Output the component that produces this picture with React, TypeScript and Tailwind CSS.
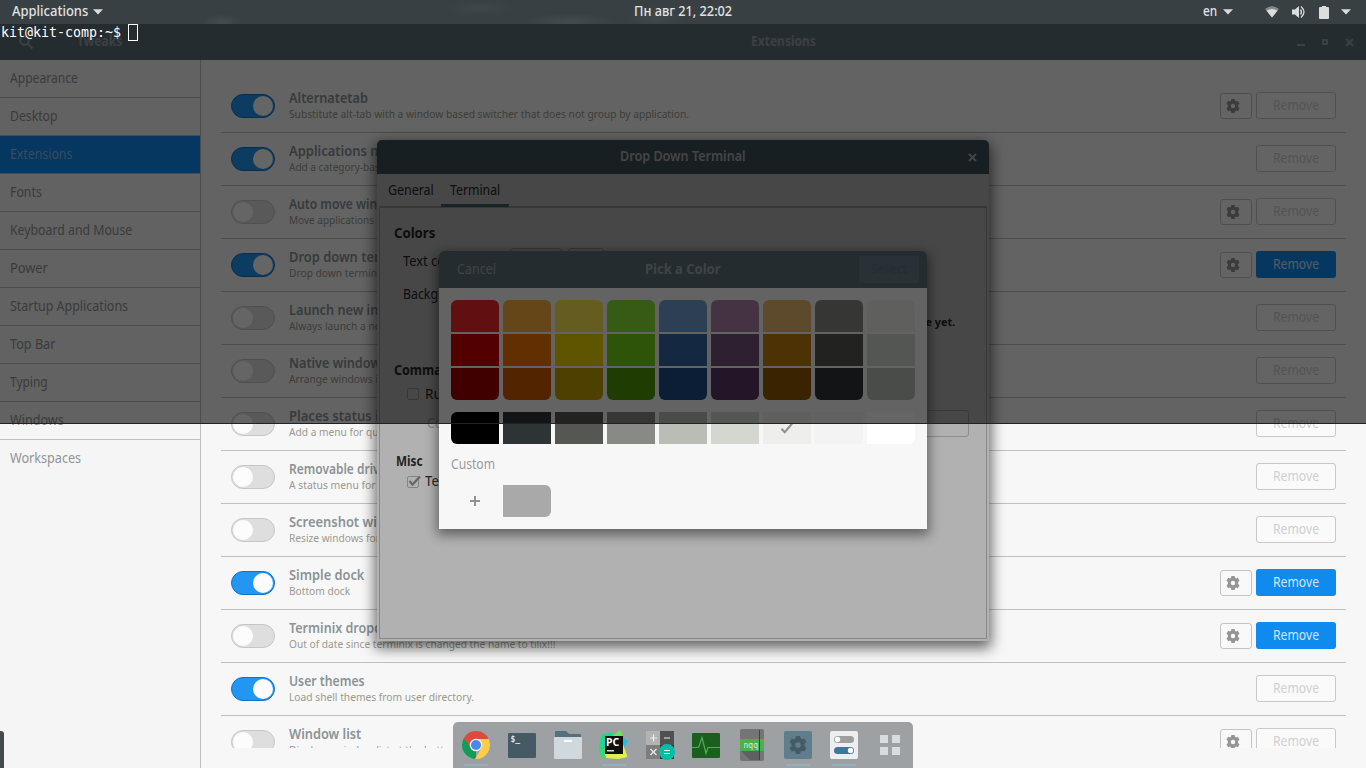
import { useLayoutEffect, useRef, useState } from "react";

/* Text set to an exact measured width, like the condensed desktop font. */
function Fit({ w, className = "", children }: { w: number; className?: string; children: string }) {
  const ref = useRef<HTMLSpanElement>(null);
  const [k, setK] = useState(1);
  useLayoutEffect(() => {
    if (ref.current) setK(w / ref.current.offsetWidth);
  }, [w, children]);
  return (
    <span className={`block whitespace-nowrap ${className}`} style={{ width: w }}>
      <span ref={ref} className="inline-block origin-left" style={{ transform: `scaleX(${k})` }}>
        {children}
      </span>
    </span>
  );
}

const sidebar: [string, number][] = [
  ["Appearance", 68],
  ["Desktop", 48],
  ["Extensions", 62],
  ["Fonts", 32],
  ["Keyboard and Mouse", 122],
  ["Power", 38],
  ["Startup Applications", 118],
  ["Top Bar", 45],
  ["Typing", 38],
  ["Windows", 54],
  ["Workspaces", 71],
];

type Ext = { t: string; tw: number; d: string; dw: number; on?: boolean; gear?: boolean; rm?: boolean };
const exts: Ext[] = [
  { t: "Alternatetab", tw: 79, d: "Substitute alt-tab with a window based switcher that does not group by application.", dw: 400, on: true, gear: true },
  { t: "Applications menu", tw: 118, d: "Add a category-based menu for applications.", dw: 211, on: true },
  { t: "Auto move windows", tw: 119, d: "Move applications to specific workspaces when they create windows.", dw: 322, gear: true },
  { t: "Drop down terminal", tw: 126, d: "Drop down terminal toggled by a key stroke.", dw: 213, on: true, gear: true, rm: true },
  { t: "Launch new instance", tw: 130, d: "Always launch a new instance when clicking in the dash.", dw: 270 },
  { t: "Native window placement", tw: 160, d: "Arrange windows in overview in a more compact way.", dw: 257 },
  { t: "Places status indicator", tw: 143, d: "Add a menu for quickly navigating places.", dw: 199 },
  { t: "Removable drive menu", tw: 135, d: "A status menu for accessing removable devices.", dw: 231 },
  { t: "Screenshot window sizer", tw: 155, d: "Resize windows for GNOME Software screenshots.", dw: 239 },
  { t: "Simple dock", tw: 75, d: "Bottom dock", dw: 61, on: true, gear: true, rm: true },
  { t: "Terminix dropdown", tw: 119, d: "Out of date since terminix is changed the name to tilix!!!", dw: 266, gear: true, rm: true },
  { t: "User themes", tw: 76, d: "Load shell themes from user directory.", dw: 185, on: true },
  { t: "Window list", tw: 72, d: "Display a window list at the bottom of the screen.", dw: 240, gear: true },
];

function Toggle({ on }: { on?: boolean }) {
  return on ? (
    <div className="flex h-6 w-11 items-center justify-end rounded-full border border-[#1272c8] bg-[#2196f3] px-px">
      <div className="size-5 rounded-full bg-[#fcfcfc]" />
    </div>
  ) : (
    <div className="flex h-6 w-11 items-center rounded-full border border-[#c6c6c6] bg-[#dedede] px-px">
      <div className="size-5 rounded-full bg-[#fcfcfc]" />
    </div>
  );
}

function Gear({ s, fill }: { s: number; fill: string }) {
  return (
    <svg width={s} height={s} viewBox="0 0 14 14">
      <path
        fill={fill}
        fillRule="evenodd"
        d="M5.4 0h3.2l.4 1.8 1.1.65 1.8-.6 1.6 2.8L12.1 6v2l1.4 1.35-1.6 2.8-1.8-.6-1.1.65-.4 1.8H5.4L5 12.2l-1.1-.65-1.8.6-1.6-2.8L1.9 8V6L.5 4.65l1.6-2.8 1.8.6L5 1.8zM7 4.8a2.2 2.2 0 1 0 0 4.4 2.2 2.2 0 0 0 0-4.4z"
      />
    </svg>
  );
}

function Row({ e }: { e: Ext }) {
  return (
    <div className="flex h-[53px] shrink-0 items-start border-b border-[#c0c0c0] px-2.5">
      <div className="mt-3.5">
        <Toggle on={e.on} />
      </div>
      <div className="mt-[9px] ml-3.5 flex-1">
        <Fit w={e.tw} className="text-[13.5px] leading-[18px] font-semibold text-[#8b9396]">{e.t}</Fit>
        <Fit w={e.dw} className="text-[11.5px] leading-[14px] text-[#98998f]">{e.d}</Fit>
      </div>
      {e.gear && (
        <div className="mt-[13px] mr-1 flex h-[26px] w-8 items-center rounded-[3px] border border-[#c4c4c4] bg-[#f9f9f9] pl-[5px]">
          <Gear s={14} fill="#959595" />
        </div>
      )}
      {e.rm ? (
        <div className="mt-3 flex h-[27px] w-20 items-center justify-center rounded-[3px] bg-[#0f8bf0] text-[13.5px] text-[#cfe7fa]">
          <Fit w={46}>Remove</Fit>
        </div>
      ) : (
        <div className="mt-3 flex h-[27px] w-20 items-center justify-center rounded-[3px] border border-[#c8c8c8] bg-[#fafafa] text-[13.5px] text-[#d0d0d0]">
          <Fit w={46}>Remove</Fit>
        </div>
      )}
    </div>
  );
}

function Cross({ color }: { color: string }) {
  return (
    <svg width="9" height="9" viewBox="0 0 9 9" stroke={color} strokeWidth="2">
      <path d="M1 1l7 7M8 1l-7 7" />
    </svg>
  );
}

const Caret = () => (
  <svg width="10" height="6" viewBox="0 0 10 6">
    <path d="M0 .3h10L5 5.6z" fill="#dadcdc" />
  </svg>
);

const palette = [
  ["bg-[#ef2929]", "bg-[#cc0000]", "bg-[#a40000]"],
  ["bg-[#fcaf3e]", "bg-[#f57900]", "bg-[#ce5c00]"],
  ["bg-[#fce94f]", "bg-[#edd400]", "bg-[#c4a000]"],
  ["bg-[#8ae234]", "bg-[#73d216]", "bg-[#4e9a06]"],
  ["bg-[#729fcf]", "bg-[#3465a4]", "bg-[#204a87]"],
  ["bg-[#ad7fa8]", "bg-[#75507b]", "bg-[#5c3566]"],
  ["bg-[#e9b96e]", "bg-[#c17d11]", "bg-[#8f5902]"],
  ["bg-[#888a85]", "bg-[#555753]", "bg-[#2e3436]"],
  ["bg-[#eeeeec]", "bg-[#d3d7cf]", "bg-[#babdb6]"],
];
const grays = [
  "bg-black rounded-l-[6px]",
  "bg-[#2e3436]",
  "bg-[#555753]",
  "bg-[#888a85]",
  "bg-[#babdb6]",
  "bg-[#d3d7cf]",
  "bg-[#eeeeec]",
  "bg-[#f3f3f3]",
  "bg-white rounded-r-[6px]",
];

function ColorDialog() {
  return (
    <div className="absolute top-[251px] left-[439px] flex h-[278px] w-[488px] flex-col rounded-t-[5px] bg-[#f7f7f7] shadow-[0_4px_12px_2px_rgba(0,0,0,0.45)]">
      <div className="flex h-[37px] items-center rounded-t-[5px] bg-[#5c6e79] pr-2 pl-[18px] text-[13.5px] text-[#9fa9ae]">
        <Fit w={39}>Cancel</Fit>
        <Fit w={75} className="ml-[149px] font-bold">Pick a Color</Fit>
        <div className="ml-auto flex h-[27px] w-[60px] items-center justify-center rounded-[2px] bg-[#667a87] text-[#587586]">
          <Fit w={37} className="font-semibold">Select</Fit>
        </div>
      </div>
      <div className="flex gap-1 px-3 pt-3">
        {palette.map((col, i) => (
          <div key={i} className="flex w-12 flex-col gap-0.5 overflow-hidden rounded-[6px]">
            {col.map((c) => (
              <div key={c} className={`h-8 ${c}`} />
            ))}
          </div>
        ))}
      </div>
      <div className="flex gap-1 px-3 pt-3">
        {grays.map((c, i) => (
          <div key={c} className={`flex h-8 w-12 items-center justify-center ${c}`}>
            {i === 6 && (
              <svg width="14" height="12" viewBox="0 0 14 12" fill="none" stroke="#8f908f" strokeWidth="2">
                <path d="M1.5 6.8l3.2 3.4L12.2 1.5" />
              </svg>
            )}
          </div>
        ))}
      </div>
      <Fit w={44} className="mt-2.5 ml-3 text-[13.5px] leading-5 text-[#999c9d]">Custom</Fit>
      <div className="mt-[11px] flex gap-1 px-3">
        <div className="flex h-8 w-12 items-center justify-center">
          <svg width="10" height="10" viewBox="0 0 10 10" fill="#939393">
            <path d="M4 0h2v4h4v2H6v4H4V6H0V4h4z" />
          </svg>
        </div>
        <div className="h-8 w-12 rounded-r-[6px] bg-[#a9a9a9]" />
      </div>
    </div>
  );
}

function SettingsDialog() {
  return (
    <div className="absolute top-[140px] left-[377px] flex h-[501px] w-[612px] flex-col rounded-t-[5px] bg-[#b1b1b1] text-[13.5px] text-[#242424] shadow-[0_5px_14px_2px_rgba(0,0,0,0.6)]">
      <div className="flex h-[34px] items-center rounded-t-[5px] bg-[#3e4e55] pl-[243px] text-[#a9adb0]">
        <Fit w={126} className="pb-0.5 font-semibold">Drop Down Terminal</Fit>
        <div className="mr-3 ml-auto">
          <Cross color="#a9adb0" />
        </div>
      </div>
      <div className="z-10 flex h-[33px] shrink-0">
        <div className="h-8 w-16 pt-1.5 pl-[11px]">
          <Fit w={46}>General</Fit>
        </div>
        <div className="h-[33px] w-[68px] border-b-3 border-[#425760] pt-1.5 pl-[9px]">
          <Fit w={50}>Terminal</Fit>
        </div>
      </div>
      <div className="-mt-px ml-0.5 h-[433px] w-[608px] shrink-0 border border-t-2 border-[#898989] pl-[14px]">
        <Fit w={41} className="mt-[15px] leading-5 font-bold">Colors</Fit>
        <div className="mt-2 flex pl-[9px] leading-5">
          <Fit w={62}>Text color:</Fit>
          <div className="-mt-2.5 ml-[45px] flex gap-1.5">
            <div className="mt-[7px] h-7 w-[52px] rounded-[3px] border border-[#898989]" />
            <div className="mt-[7px] h-7 w-9 rounded-[3px] border border-[#898989]" />
          </div>
        </div>
        <Fit w={106} className="mt-2 ml-[9px] leading-5">Background color:</Fit>
        <div className="mt-2 flex justify-end pr-[31px] text-[10.5px]">
          <Fit w={207} className="leading-5 font-bold">Transparency is not available here yet.</Fit>
        </div>
        <Fit w={64} className="mt-7 leading-5 font-bold">Command</Fit>
        <div className="mt-1 flex items-center gap-1.5 pl-[13px] leading-5">
          <div className="size-3 rounded-[2px] border border-[#898989]" />
          <Fit w={154}>Run a custom command</Fit>
        </div>
        <div className="mt-1.5 flex items-center pr-[17px] pl-[33px] text-[#858585]">
          <Fit w={108}>Custom command:</Fit>
          <div className="ml-auto h-[27px] w-[330px] rounded-[3px] border border-[#8d8d8d]" />
        </div>
        <Fit w={27} className="mt-[14px] ml-0.5 leading-5 font-bold">Misc</Fit>
        <div className="flex items-center gap-1.5 pl-[13px] leading-5">
          <svg width="14" height="13" viewBox="0 0 14 13" fill="none" className="-mr-0.5">
            <rect x=".5" y="1.5" width="11" height="11" rx="1.5" stroke="#848484" />
            <path d="M2.5 6l3 3.6L13 1.5" stroke="#666" strokeWidth="2.2" />
          </svg>
          <Fit w={146}>Terminal can be resized</Fit>
        </div>
      </div>
    </div>
  );
}

const icons = [
  { run: true, el: (
    <svg width="28" height="28" viewBox="0 0 28 28">
      <path d="M14 14V28A14 14 0 0 1 1.9 7z" fill="#109d59" />
      <path d="M14 8h12.6A14 14 0 0 1 13 28L19.500 17z" fill="#fccd45" />
      <path d="M1.900 7L8.800 17 14 8H26.600A14 14 0 0 0 1.900 7z" fill="#dd4b3e" />
      <circle cx="14" cy="14" r="6.3" fill="#f4f4f4" />
      <circle cx="14" cy="14" r="5" fill="#4687f4" />
    </svg>) },
  { el: (
    <svg width="28" height="28" viewBox="0 0 28 28">
      <rect y="2" width="28" height="25" rx="1" fill="#455a64" />
      <text x="2.5" y="11" fontSize="8" fontFamily="DejaVu Sans Mono, monospace" fontWeight="bold" fill="#dfe8eb">$_</text>
    </svg>) },
  { el: (
    <svg width="28" height="28" viewBox="0 0 28 28">
      <path d="M1 1q0-1 1-1h10l3 3h11q1 0 1 1v4H1z" fill="#546e7a" />
      <rect y="6" width="28" height="22" rx="1" fill="#cfd8dc" />
      <rect x="10" y="9" width="8" height="2" rx=".5" fill="#fff" />
    </svg>) },
  { run: true, el: (
    <svg width="30" height="30" viewBox="0 0 30 30">
      <path d="M2 5L13 2l4 5 7-1v18L5 27 0 20z" fill="#21d789" />
      <path d="M22 6l7 5-5 8z" fill="#12c6e8" />
      <path d="M13 6l8.500-6L24 7z" fill="#6fe35a" />
      <path d="M24 14l4.500 13-9 2-13-1-1-5h18z" fill="#dff04c" />
      <path d="M0 20l6-2v7l2 4-7-3z" fill="#35d779" />
      <rect x="6" y="6" width="18" height="18" fill="#101010" />
      <text x="7" y="15.5" fontSize="10.500" fontWeight="bold" fontFamily="Noto Sans, sans-serif" fill="#fff">PC</text>
      <rect x="8" y="20" width="7" height="1.5" fill="#ddd" />
    </svg>) },
  { el: (
    <svg width="30" height="30" viewBox="0 0 30 30">
      <path d="M1 1h14v14H1z" fill="#b3b3b3" />
      <path d="M15 1h14v14H15z" fill="#505050" />
      <path d="M1 15h14v14H1z" fill="#7d7d7d" />
      <path d="M15 15h14v14H15z" fill="#333" />
      <path d="M5 8h7M8.500 4.500v7M19 8h6M5.500 19l6 6M11.500 19l-6 6" stroke="#eee" strokeWidth="1.200" />
      <circle cx="22" cy="22" r="8" fill="#00bfa5" />
      <path d="M19 20.500h6M19 23.500h6" stroke="#fff" strokeWidth="1.200" />
    </svg>) },
  { el: (
    <svg width="28" height="28" viewBox="0 0 28 28">
      <rect y="2" width="28" height="25" rx="1" fill="#1b5e20" />
      <path d="M0 16.500h6l1-1 3-9 4 16 2-6h12" fill="none" stroke="#4caf50" strokeWidth="1.200" />
    </svg>) },
  { el: (
    <svg width="24" height="32" viewBox="0 0 24 32">
      <rect width="24" height="32" rx="2" fill="#757575" />
      <path d="M1 22h19v9H10z" fill="#606060" />
      <path d="M0 10h24v12H0z" fill="#4caf50" />
      <path d="M19.500 1v30" stroke="#424242" />
      <text x="3.500" y="18.500" fontSize="8" fontFamily="DejaVu Sans Mono, monospace" fill="#d7f0d8">nqq</text>
    </svg>) },
  { run: true, el: (
    <svg width="28" height="28" viewBox="0 0 28 28">
      <rect width="28" height="28" rx="2" fill="#607d8b" />
      <g transform="translate(5 5) scale(1.286)">
        <path fill="#455a64" fillRule="evenodd" d="M5.400 0h3.200l.4 1.800 1.100.65 1.800-.6 1.600 2.800L12.100 6v2l1.400 1.350-1.600 2.800-1.800-.6-1.100.65-.4 1.800H5.400L5 12.200l-1.100-.65-1.800.6-1.600-2.800L1.900 8V6L.5 4.650l1.600-2.800 1.800.6L5 1.800zM7 4.800a2.200 2.200 0 1 0 0 4.400 2.200 2.200 0 0 0 0-4.400z" />
      </g>
    </svg>) },
  { run: true, el: (
    <svg width="28" height="28" viewBox="0 0 28 28">
      <rect width="28" height="28" rx="2" fill="#eee" />
      <rect x="4" y="5" width="20" height="7" rx="3.500" fill="#9e9e9e" />
      <circle cx="7.500" cy="8.500" r="2.700" fill="#fff" />
      <rect x="4" y="16" width="20" height="7" rx="3.500" fill="#347b9e" />
      <circle cx="20.500" cy="19.500" r="2.700" fill="#fff" />
    </svg>) },
  { el: (
    <svg width="20" height="20" viewBox="0 0 20 20" fill="#d9dcde">
      <path d="M0 0h8v8H0zM12 0h8v8h-8zM0 12h8v8H0zM12 12h8v8h-8z" />
    </svg>) },
];

export default function App() {
  return (
    <div className="relative flex h-[768px] w-[1366px] flex-col overflow-hidden bg-[#f7f7f7] font-['Noto_Sans',sans-serif]">
      <header className="flex h-6 shrink-0 items-center bg-[#384043] bg-[radial-gradient(ellipse_20px_8px_at_222px_22px,#464c4e,transparent),radial-gradient(ellipse_35px_8px_at_480px_8px,#40474a,transparent),radial-gradient(ellipse_45px_9px_at_570px_22px,#454b4d,transparent),radial-gradient(ellipse_30px_12px_at_655px_18px,#42484a,transparent)] text-[13.5px] font-medium text-[#e0e2e2]">
        <Fit w={76} className="ml-3 pb-px">Applications</Fit>
        <div className="ml-[5px]"><Caret /></div>
        <Fit w={98} className="ml-[531px] pb-px">Пн авг 21, 22:02</Fit>
        <Fit w={14} className="ml-[471px] pb-px">en</Fit>
        <div className="ml-1.5"><Caret /></div>
        <svg className="ml-8" width="14" height="12" viewBox="0 0 14 12">
          <path d="M0 3Q7-2.500 14 3L7 11.500z" fill="#84898b" />
          <path d="M1.600 4.800Q7 1 12.400 4.800L7 11.500z" fill="#dcdede" />
        </svg>
        <svg className="ml-[13px]" width="14" height="14" viewBox="0 0 14 14" fill="none" stroke="#dcdede">
          <path d="M0 4.500h3L7 1v12L3 9.500H0z" fill="#dcdede" stroke="none" />
          <path d="M8.500 4.500q2 2.500 0 5" strokeWidth="1.300" />
          <path d="M9 1.500q6 5.500 0 11" strokeWidth="1.300" />
        </svg>
        <svg className="ml-[13px]" width="10" height="13" viewBox="0 0 10 13" fill="#dcdede">
          <path d="M3 0h4v1h2q1 0 1 1v10q0 1-1 1H1q-1 0-1-1V2q0-1 1-1h2z" />
        </svg>
        <div className="ml-3"><Caret /></div>
      </header>
      <div className="flex h-9 shrink-0 items-center bg-[#5c6e79] text-[13.5px] font-bold text-[#97a1a6]">
        <svg className="ml-[19px]" width="14" height="14" viewBox="0 0 14 14" fill="none" stroke="#97a1a6" strokeWidth="2">
          <circle cx="5.500" cy="5.500" r="4.200" />
          <path d="M8.500 8.500l5 5" />
        </svg>
        <Fit w={45} className="ml-[44px] pb-0.5">Tweaks</Fit>
        <Fit w={65} className="ml-[629px] pb-0.5">Extensions</Fit>
        <div className="ml-auto flex items-center pr-3">
          <div className="mt-[6px] mr-[17px] h-0.5 w-2 bg-[#97a1a6]" />
          <div className="mr-[17px] size-1.5 border-2 border-[#97a1a6]" />
          <Cross color="#97a1a6" />
        </div>
      </div>
      <div className="flex min-h-0 flex-1">
        <nav className="w-[201px] border-r border-[#c0c0c0] bg-[#f5f5f5] text-[13.5px]">
          {sidebar.map(([name, w], i) => (
            <div
              key={name}
              className={
                i === 2
                  ? "flex h-[38px] items-center border-b border-[#c0c0c0] bg-[#0f8bf0] pl-2.5 text-[#8fbde3]"
                  : i === 10
                    ? "flex h-[37px] items-center pl-2.5 text-[#919495]"
                    : "flex h-[38px] items-center border-b border-[#c0c0c0] pl-2.5 text-[#919495]"
              }
            >
              <Fit w={w}>{name}</Fit>
            </div>
          ))}
        </nav>
        <main className="flex h-[688px] flex-1 flex-col overflow-hidden px-5 pt-5">
          {exts.map((e) => (
            <Row key={e.t} e={e} />
          ))}
        </main>
      </div>

      <SettingsDialog />
      <ColorDialog />

      <div className="absolute top-6 left-0 z-20 h-[400px] w-[1366px] border-b border-[#1f2325] bg-black/60 bg-clip-padding">
        <div className="flex items-start font-['DejaVu_Sans_Mono',monospace] text-[13.3px] leading-[17px] text-white">
          <Fit w={120} className="ml-px">kit@kit-comp:~$</Fit>
          <div className="ml-[7px] h-[17px] w-2.5 border border-white" />
        </div>
      </div>

      <div className="absolute bottom-0 left-0 h-[37px] w-1 rounded-tr-[3px] bg-[#444b4d]" />
      <div className="absolute bottom-0 left-[453px] flex h-[46px] w-[460px] rounded-t-[5px] bg-[#9ea1a4]">
        {icons.map((ic, i) => (
          <div key={i} className="flex w-[46px] flex-col items-center">
            <div className="flex h-[42px] items-center pt-[3px]">{ic.el}</div>
            {ic.run && <div className="h-0.5 w-6 bg-[#98b0ba]" />}
          </div>
        ))}
      </div>
    </div>
  );
}
